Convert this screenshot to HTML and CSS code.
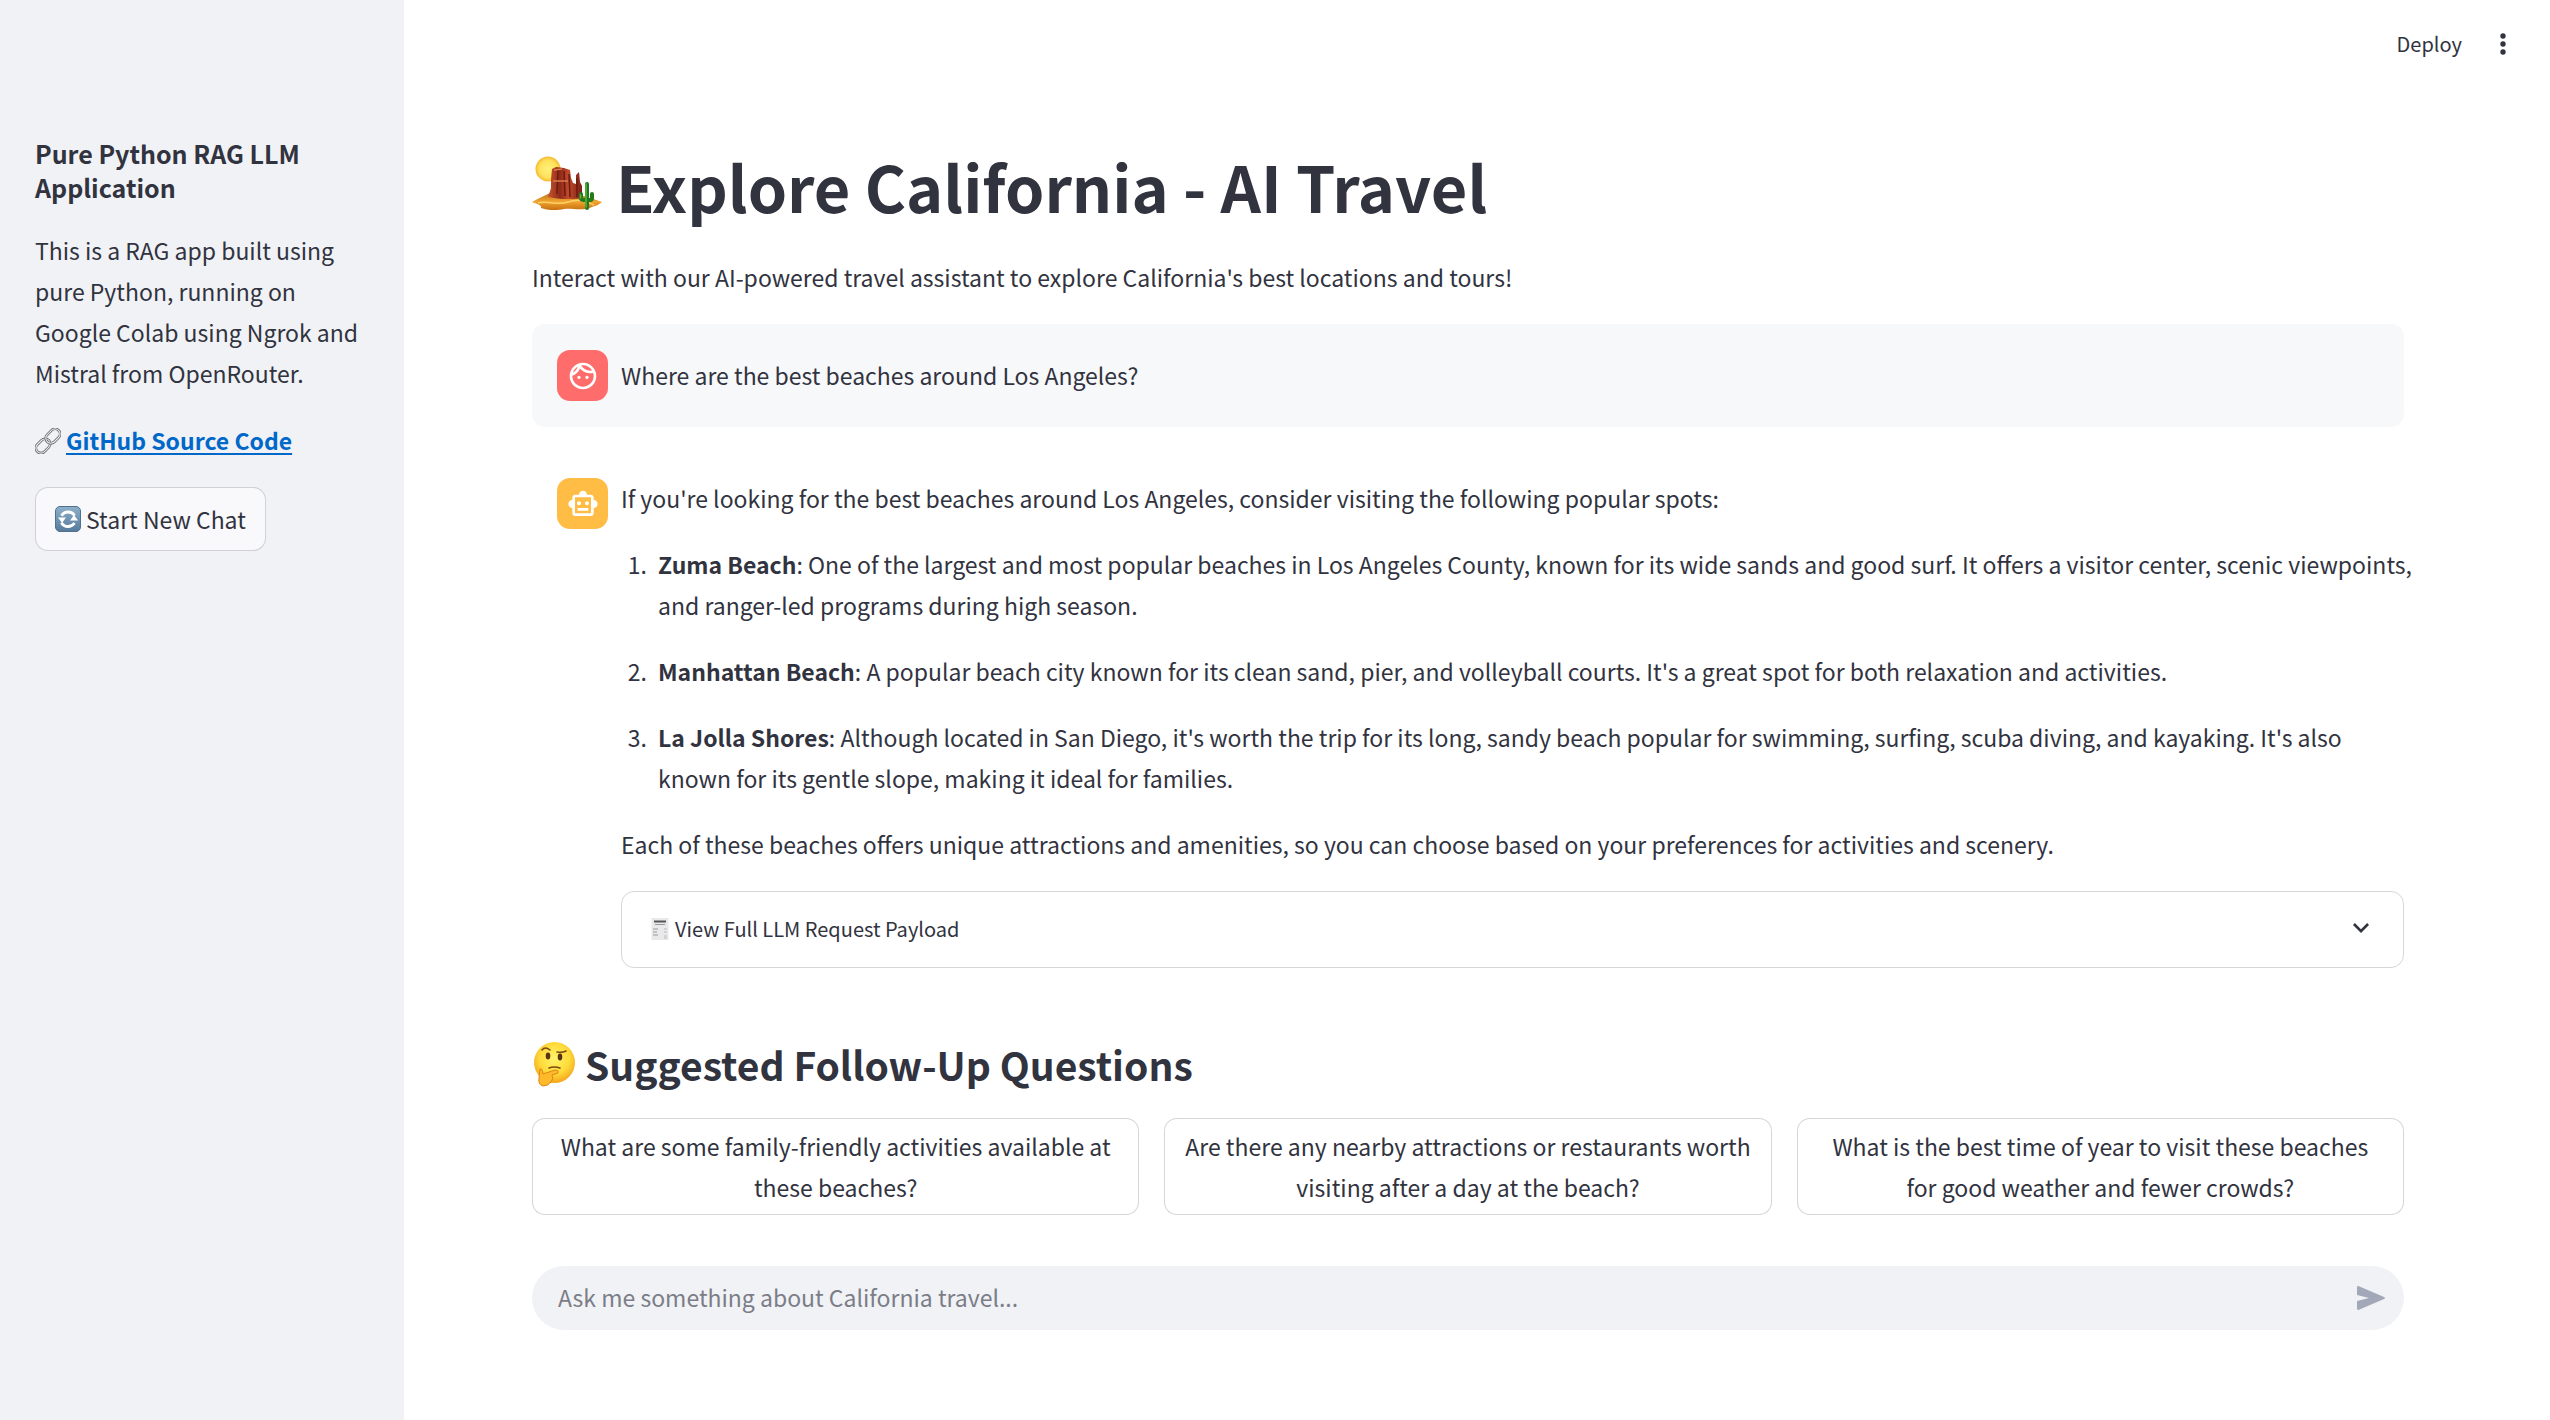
FILE: index.html
```html
<!DOCTYPE html>
<html lang="en">
<head>
<meta charset="utf-8">
<title>Explore California - AI Travel</title>
<link rel="stylesheet" href="styles.css">
</head>
<body>
<div class="app">
  <aside class="sidebar">
    <h2 class="sidebar-title">Pure Python RAG LLM Application</h2>
    <p class="sidebar-text">This is a RAG app built using pure Python, running on Google Colab using Ngrok and Mistral from OpenRouter.</p>
    <p class="source">
      <svg class="emoji emoji-text" viewBox="0 0 26 26" aria-hidden="true" fill="none">
        <g transform="rotate(-45 13 13)">
          <rect x="-2" y="8" width="16" height="10" rx="5" stroke="#55555a" stroke-width="2.600"/>
          <rect x="-2" y="8" width="16" height="10" rx="5" stroke="#e6eaee" stroke-width="1.300"/>
          <rect x="12" y="8" width="16" height="10" rx="5" stroke="#55555a" stroke-width="2.600"/>
          <rect x="12" y="8" width="16" height="10" rx="5" stroke="#e6eaee" stroke-width="1.300"/>
        </g>
      </svg>
      <a class="source-link" href="#source">GitHub Source Code</a>
    </p>
    <button class="button new-chat" type="button">
      <svg class="emoji emoji-text" viewBox="0 0 26 26" aria-hidden="true">
        <defs><linearGradient id="tile" x1="0" y1="0" x2="0" y2="1"><stop offset="0" stop-color="#8fb0ca"/><stop offset="1" stop-color="#557a9b"/></linearGradient></defs>
        <rect x=".5" y=".5" width="25" height="25" rx="4.500" fill="url(#tile)" stroke="#4f7190"/>
        <g fill="none" stroke="#fff" stroke-width="2.800"><path d="M6.500 9.800A7.700 7.700 0 0 1 19.600 9.500"/><path d="M19.500 17A7.700 7.700 0 0 1 6.400 16.700"/></g>
        <path d="M23 14.500h-8l4-5.500zM3 11.500h8l-4 5.500z" fill="#fff" transform="rotate(180 13 13)"/>
      </svg>
      <span>Start New Chat</span>
    </button>
  </aside>

  <div class="main">
    <header class="toolbar">
      <button class="plain deploy" type="button">Deploy</button>
      <button class="plain menu" type="button" aria-label="Main menu">
        <svg viewBox="0 0 24 24" width="32" height="32" fill="currentColor"><circle cx="12" cy="6" r="2"/><circle cx="12" cy="12" r="2"/><circle cx="12" cy="18" r="2"/></svg>
      </button>
    </header>

    <main class="content">
      <h1 class="title">
        <svg class="emoji emoji-title" viewBox="0 0 70 56" aria-hidden="true">
          <defs>
            <radialGradient id="sun"><stop offset="0" stop-color="#fff27a"/><stop offset=".7" stop-color="#ffe15a"/><stop offset="1" stop-color="#f5b932"/></radialGradient>
            <linearGradient id="sand" x1="0" y1="0" x2="0" y2="1"><stop offset="0" stop-color="#b9711c"/><stop offset=".5" stop-color="#f2a52f"/><stop offset="1" stop-color="#c76f12"/></linearGradient>
            <linearGradient id="rock"><stop offset="0" stop-color="#c9552e"/><stop offset=".35" stop-color="#8e2a19"/><stop offset=".6" stop-color="#c24a2b"/><stop offset="1" stop-color="#7a2114"/></linearGradient>
          </defs>
          <circle cx="16" cy="13" r="12.500" fill="url(#sun)"/>
          <path d="M0 46C5 43 12 40 18 37L52 40C60 42 67 45 70 46C66 50 61 50 58 52C48 55 40 52 32 53C24 55 14 54 9 52C10 49 5 48 0 46Z" fill="url(#sand)"/>
          <path d="M16 41L19 32V23L20 13L24 11L32 12L38 14L39 22L41 27L44 28V19L47 16L48 26L50 30V42C40 44 25 43 16 41Z" fill="url(#rock)"/>
          <path d="M26 14L25 38M32 15L33 40M37 18L38 41M45 22V41" stroke="#6b1a12" stroke-width="1.500" fill="none"/>
          <path d="M22 14L30 13M21 25H36" stroke="#df7a4c" stroke-width="1.500" fill="none"/>
          <path d="M6 47C16 44 24 50 36 46S54 46 62 49" stroke="#ffd06a" stroke-width="1.500" fill="none"/>
          <path d="M55 52V28M49 38V42Q49 44 52 44H58Q60 44 60 42V38" stroke="#227a1c" stroke-width="4" stroke-linecap="round" fill="none"/>
          <path d="M54 51V28M48.500 39V42" stroke="#5cb83c" stroke-width="1.500" stroke-linecap="round" fill="none"/>
        </svg>
        <span>Explore California - AI Travel</span>
      </h1>
      <p class="intro">Interact with our AI-powered travel assistant to explore California's best locations and tours!</p>

      <section class="message message-user">
        <div class="avatar avatar-user">
          <svg viewBox="0 0 24 24" width="32" height="32" fill="#fff" aria-hidden="true"><path d="M10.250 13c0 .69-.56 1.250-1.250 1.250S7.750 13.690 7.750 13s.56-1.250 1.250-1.250 1.250.56 1.250 1.250zM15 11.750c-.69 0-1.250.56-1.250 1.250s.56 1.250 1.250 1.250 1.250-.56 1.250-1.250-.56-1.250-1.250-1.250zm7 .25c0 5.520-4.480 10-10 10S2 17.520 2 12 6.480 2 12 2s10 4.480 10 10zM10.660 4.120C12.060 6.440 14.600 8 17.500 8c.46 0 .91-.05 1.340-.12C17.440 5.560 14.900 4 12 4c-.46 0-.91.05-1.340.12zM4.420 9.470c1.710-.97 3.030-2.550 3.660-4.440C6.370 6 5.050 7.580 4.420 9.470zM20 12c0-.78-.12-1.530-.33-2.240-.7.150-1.420.24-2.170.24-3.130 0-5.920-1.440-7.760-3.690C8.690 8.870 6.600 10.880 4 11.860c.01.04 0 .09 0 .14 0 4.410 3.590 8 8 8s8-3.590 8-8z"/></svg>
        </div>
        <p>Where are the best beaches around Los Angeles?</p>
      </section>

      <section class="message">
        <div class="avatar avatar-bot">
          <svg viewBox="0 0 24 24" width="32" height="32" fill="#fff" aria-hidden="true"><path d="M20 9V7c0-1.100-.9-2-2-2h-3c0-1.660-1.340-3-3-3S9 3.340 9 5H6c-1.100 0-2 .9-2 2v2c-1.660 0-3 1.340-3 3s1.340 3 3 3v4c0 1.100.9 2 2 2h12c1.100 0 2-.9 2-2v-4c1.660 0 3-1.340 3-3s-1.340-3-3-3zm-2 10H6V7h12v12zm-9-6c-.83 0-1.500-.67-1.500-1.500S8.170 10 9 10s1.500.67 1.500 1.500S9.830 13 9 13zm7.500-1.500c0 .83-.67 1.500-1.500 1.500s-1.500-.67-1.500-1.500.67-1.500 1.500-1.500 1.500.67 1.500 1.500zM8 15h8v2H8v-2z"/></svg>
        </div>
        <div class="answer">
          <p>If you're looking for the best beaches around Los Angeles, consider visiting the following popular spots:</p>
          <ol class="places">
            <li><strong>Zuma Beach</strong>: One of the largest and most popular beaches in Los Angeles County, known for its wide sands and good surf. It offers a visitor center, scenic viewpoints, and ranger-led programs during high season.</li>
            <li><strong>Manhattan Beach</strong>: A popular beach city known for its clean sand, pier, and volleyball courts. It's a great spot for both relaxation and activities.</li>
            <li><strong>La Jolla Shores</strong>: Although located in San Diego, it's worth the trip for its long, sandy beach popular for swimming, surfing, scuba diving, and kayaking. It's also known for its gentle slope, making it ideal for families.</li>
          </ol>
          <p>Each of these beaches offers unique attractions and amenities, so you can choose based on your preferences for activities and scenery.</p>
          <details class="payload">
            <summary class="payload-summary">
              <svg class="emoji emoji-small" viewBox="0 0 20 24" aria-hidden="true"><path d="M1.500 1h17v22h-17z" fill="#e9e9eb"/><path d="M4 4.500h12" stroke="#555" stroke-width="2"/><path d="M5 7.500h10M3 12h5M3 15h4M3 18h5" stroke="#999"/><path d="M14 12h3M14 15h3M14 19h3M14 21h3" stroke="#bbb"/></svg>
              <span>View Full LLM Request Payload</span>
              <svg class="chevron" viewBox="0 0 24 24" width="32" height="32" fill="currentColor" aria-hidden="true"><path d="M7.410 7.590 12 12.170l4.590-4.580L18 9l-6 6-6-6z"/></svg>
            </summary>
          </details>
        </div>
      </section>

      <h2 class="subtitle">
        <svg class="emoji emoji-subtitle" viewBox="0 0 44 46" aria-hidden="true">
          <defs><radialGradient id="face" cx=".5" cy=".4" r=".6"><stop offset="0" stop-color="#fff36b"/><stop offset=".6" stop-color="#ffdb3a"/><stop offset="1" stop-color="#f3a51d"/></radialGradient></defs>
          <circle cx="22.500" cy="21.500" r="20.500" fill="url(#face)"/>
          <ellipse cx="16" cy="15" rx="2.300" ry="3.400" fill="#5a3410"/><ellipse cx="28" cy="16" rx="2.300" ry="3.400" fill="#5a3410"/>
          <path d="M10 9Q13 5 18 9M25 11Q30 12 34 10M17 27Q22 25 28 27" stroke="#7a4a12" stroke-width="1.600" stroke-linecap="round" fill="none"/>
          <path d="M8 28Q10 27 11 33L23 29Q27 29 26 32L20 34Q22 38 19 41Q16 45 11 45Q6 44 7 37Z" fill="#ffb92a" stroke="#dc8712"/>
        </svg>
        <span>Suggested Follow-Up Questions</span>
      </h2>
      <div class="suggestions">
        <button class="button suggestion" type="button">What are some family-friendly activities available at these beaches?</button>
        <button class="button suggestion" type="button">Are there any nearby attractions or restaurants worth visiting after a day at the beach?</button>
        <button class="button suggestion" type="button">What is the best time of year to visit these beaches for good weather and fewer crowds?</button>
      </div>

      <form class="composer">
        <input class="composer-input" type="text" aria-label="Message" placeholder="Ask me something about California travel...">
        <button class="plain send" type="button" aria-label="Send">
          <svg viewBox="0 0 28 24" width="28" height="24" fill="currentColor"><path d="M0 1.500Q0-.5 2 .3L27 11Q29 12 27 13L2 23.700Q0 24.500 0 22.500V15L12 12 0 9z"/></svg>
        </button>
      </form>
    </main>
  </div>
</div>
</body>
</html>
```
FILE: styles.css
```css
* { box-sizing: border-box; }

body {
  margin: 0;
  background: #fff;
  color: #31333f;
  font-family: "Noto Sans CJK JP", "Noto Sans", sans-serif;
  font-size: 23px;
  line-height: 41px;
}

h1, h2, p, ol { margin: 0; }

button, input { font: inherit; color: inherit; }

.app { display: flex; min-height: 100vh; }

.sidebar {
  flex: 0 0 404px;
  padding: 136px 35px 36px;
  background: #f0f2f6;
}

.sidebar-title { font-size: 25px; line-height: 34px; font-weight: 600; }
.sidebar-text { margin-top: 26px; }

.source { display: flex; align-items: center; gap: 5px; margin-top: 26px; }
.source-link { color: #0068c9; font-weight: 600; text-underline-offset: 3px; }

.emoji { flex: none; }
.emoji-text { width: 26px; height: 26px; }
.emoji-small { width: 20px; height: 24px; }
.emoji-title { width: 70px; height: 56px; }
.emoji-subtitle { width: 44px; height: 46px; }

.button {
  border: 1px solid rgba(49, 51, 63, 0.2);
  border-radius: 13px;
  background: #fff;
  cursor: pointer;
}

.new-chat {
  display: flex;
  align-items: center;
  gap: 5px;
  height: 64px;
  margin-top: 26px;
  padding: 0 19px;
  background: #f9f9fb;
}

.plain { padding: 0; border: 0; background: none; cursor: pointer; }

.main { flex: 1; min-width: 0; }

.toolbar {
  display: flex;
  justify-content: flex-end;
  align-items: center;
  gap: 25px;
  height: 88px;
  padding-right: 31px;
}

.deploy { padding-bottom: 2px; font-size: 20px; }
.menu { display: flex; }

.content { padding: 56px 146px 90px 128px; }

.title {
  display: flex;
  align-items: center;
  gap: 14px;
  font-size: 63px;
  line-height: 84px;
  font-weight: 700;
}
.emoji-title { margin-bottom: 4px; }

.intro { margin-top: 29px; }

.message { display: flex; gap: 13px; margin-top: 26px; padding: 26px 0 0 25px; }
.message-user {
  align-items: center;
  padding: 26px 25px;
  border-radius: 13px;
  background: #f7f8fa;
}
.message-user + .message { margin-top: 25px; }

.avatar {
  display: flex;
  flex: none;
  justify-content: center;
  align-items: center;
  width: 51px;
  height: 51px;
  border-radius: 13px;
}
.avatar-user { background: #ff6c6c; }
.avatar-bot { background: #ffbd45; }

.answer { flex: 1; min-width: 0; }

/* The list may run slightly into the right gutter. */
.places { margin: 25px -12px 25px 0; padding-left: 31px; }
.places li { padding-left: 6px; }
.places li + li { margin-top: 25px; }

.payload {
  margin-top: 26px;
  border: 1px solid rgba(49, 51, 63, 0.2);
  border-radius: 13px;
}

.payload-summary {
  display: flex;
  align-items: center;
  gap: 5px;
  height: 75px;
  padding: 0 26px 2px 28px;
  font-size: 20px;
  cursor: pointer;
  list-style: none;
}

.chevron { margin-left: auto; }

.subtitle {
  display: flex;
  align-items: center;
  gap: 9px;
  margin-top: 69px;
  font-size: 39px;
  line-height: 54px;
  font-weight: 600;
}

.suggestions {
  display: grid;
  grid-template-columns: repeat(3, 1fr);
  gap: 25px;
  margin-top: 27px;
}

.suggestion { min-height: 97px; padding: 6px 19px; }

.composer {
  display: flex;
  align-items: center;
  height: 64px;
  margin-top: 51px;
  padding: 0 19px 0 26px;
  border-radius: 32px;
  background: #f0f2f6;
}

.composer-input { flex: 1; min-width: 0; padding: 0 0 2px; border: 0; outline: 0; background: none; }
.composer-input::placeholder { color: #7b7d87; opacity: 1; }

.send { display: flex; color: #a3a8b8; }
```
